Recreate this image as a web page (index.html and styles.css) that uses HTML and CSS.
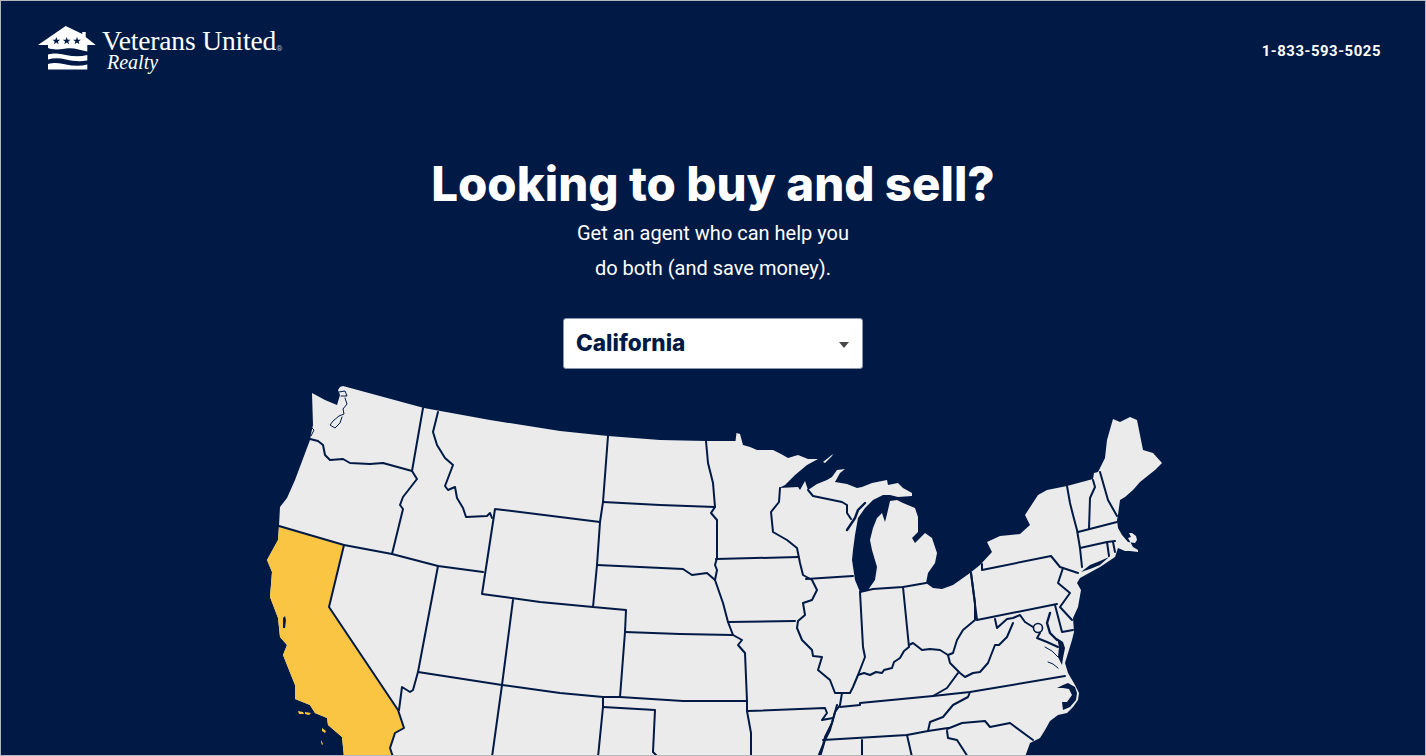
FILE: index.html
```html
<!DOCTYPE html>
<html lang="en">
<head>
<meta charset="utf-8">
<title>Veterans United Realty</title>
<link rel="stylesheet" href="styles.css">
</head>
<body>
<div class="page">
  <header class="header">
    <a class="logo" href="#">
      <svg class="logo-mark" viewBox="38 25 58 46" aria-hidden="true">
        <path class="logo-white" d="M65.7 26 L82.3 34 V32 H85.7 V37 L95.7 45 H87.3 V51.5 C80 50 74 47.5 66 48.5 C59 49.5 53 50 48 48 V45 H38 Z"/>
        <polygon class="logo-star" points="56.3,37 57.3,39.7 60.2,39.7 57.9,41.5 58.7,44.3 56.3,42.6 53.9,44.3 54.7,41.5 52.4,39.7 55.3,39.7"/>
        <polygon class="logo-star" points="66.7,37 67.7,39.7 70.6,39.7 68.3,41.5 69.1,44.3 66.7,42.6 64.3,44.3 65.1,41.5 62.8,39.7 65.7,39.7"/>
        <polygon class="logo-star" points="77,37 78,39.7 80.9,39.7 78.6,41.5 79.4,44.3 77,42.6 74.6,44.3 75.4,41.5 73.1,39.7 76,39.7"/>
        <path class="logo-white" d="M48 54.5 C55 52.5 60 53.5 66 55 C73 56.5 80 57 87.3 55 V60.5 C79 62 73 61 66 59.5 C60 58 54 57.5 48 59.5 Z"/>
        <path class="logo-white" d="M48 64 C55 62 60 63 66 64.5 C73 66 80 66.5 87.3 64.5 V69.5 H48 Z"/>
      </svg>
      <span class="logo-text">
        <span class="logo-name">Veterans United<sup class="logo-reg">®</sup></span>
        <span class="logo-sub">Realty</span>
      </span>
    </a>
    <a class="phone" href="#">1-833-593-5025</a>
  </header>
  <main class="hero">
    <h1 class="title">Looking to buy and sell?</h1>
    <p class="lead">Get an agent who can help you<br>do both (and save money).</p>
    <div class="select">
      <span class="select-value">California</span>
      <span class="select-caret"></span>
    </div>
    <svg class="map" viewBox="233 380 960 376" aria-label="Map of the United States">
      <path class="land" d="M343 386 L424 408 L490 420 L560 431 L608 436 L660 440 L706 441 L735.5 441 L736.5 433 L740 434 L743 445 L750 447 L757 450 L773 450 L781 454 L788 458 L798 455 L808 459 L818 459 L807 465 L795 475 L785 485 L779 488 L798 487 L800 490 L805 481 L808 490 L817 484 L827 480 L832 477 L837 470 L845 469 L840 473 L835 482 L847 484 L857 488 L862 487 L872 483 L887 480 L888 485 L898 483 L903 488 L912 493 L912 496 L898 497 L890 495 L883 495 L873 500 L865 508 L858 518 L855 535 L853 550 L852 560 L855 580 L860 592 L868 590 L875 580 L877 567 L872 550 L870 540 L873 528 L877 518 L882 513 L885 522 L888 510 L890 501 L897 500 L903 503 L915 508 L918 517 L918 532 L912 538 L915 543 L925 533 L932 538 L937 553 L935 563 L928 573 L926 583 L933 588 L942 589 L953 585 L970 573 L980 565 L992 552 L987 542 L1000 536 L1020 534 L1030 525 L1025 515 L1038 495 L1047 490 L1067 486 L1093 479 L1094 473 L1098 472 L1105 458 L1107 440 L1113 419 L1120 422 L1130 417 L1137 420 L1143 450 L1153 453 L1162 463 L1155 470 L1145 478 L1140 482 L1133 490 L1125 497 L1120 500 L1118 515 L1117 520 L1118 528 L1122 535 L1128 542 L1135 543 L1137 540 L1136 536 L1132 533 L1129 533 L1131 537 L1128 538 L1133 547 L1138 550 L1138 552 L1130 551 L1125 551 L1118 548 L1115 557 L1100 567 L1080 578 L1077 583 L1081 590 L1078 607 L1073 618 L1074 632 L1072 640 L1065 663 L1068 673 L1075 685 L1079 693 L1078 700 L1073 707 L1067 713 L1058 715 L1050 721 L1045 730 L1040 738 L1030 743 L1025 757 L344 757 L342 737 L328 725 L327 718 L315 713 L310 705 L295 699 L295 685 L283 655 L287 645 L280 637 L278 618 L270 597 L272 572 L267 560 L278 540 L279 526 L280 507 L287 498 L295 480 L310 440 L311 434 L313 425 L312 393 L325 400 L337 405 L340 395 L338 390 L340 387 Z"/>
      <path class="ca" d="M279 526 L344 545 L329 607 L398 710 L404 728 L395 733 L390 748 L393 757 L344 757 L342 737 L328 725 L327 718 L315 713 L310 705 L295 699 L295 685 L283 655 L287 645 L280 637 L278 618 L270 597 L272 572 L267 560 L278 540 Z"/>
      <path class="ca" d="M298 711 L303 712 L304 714 L299 714 Z M305 712 L311 713 L309 715 L305 714 Z M322 728 L326 731 L325 733 L322 731 Z M321 740 L323 744 L322 745 L321 742 Z"/>
      <path class="water" d="M283 618 L285 616 L286 620 L285 628 L283 628 Z"/>
      <path class="water" d="M1057 638 L1063 642 L1065 648 L1063 658 L1062 665 L1058 657 L1059 647 Z"/>
      <path class="water" d="M1057 688 L1063 685 L1068 683 L1075 687 L1077 693 L1076 700 L1070 707 L1063 710 L1062 702 L1067 702 L1072 695 L1069 689 L1063 688 Z"/>
      <path class="water" d="M1081 572 L1090 565 L1100 561 L1109 557 L1100 565 L1090 569 Z"/>
      <path class="land" d="M823 462 L833 454 L832 456 L825 463 Z"/>
      <g class="lines">
        <path d="M310 439 L318 441 L323 445 L325 455 L330 460 L343 459 L350 463 L370 464 L383 463 L412 471"/>
        <path d="M423 408 L412 471 L417 479 L403 497 L400 505 L403 509 L392 554"/>
        <path d="M438 412 L433 432 L437 445 L445 458 L453 465 L445 486 L448 490 L455 487 L457 498 L463 508 L466 517 L487 516 L490 513 L492 518"/>
        <path d="M279 526 L344 545 L392 554 L438 566 L483 572"/>
        <path d="M344 545 L329 607 L398 710 L404 728 L395 733 L390 748 L393 757"/>
        <path d="M438 566 L418 672 L413 690 L410 692 L402 687 L399 710"/>
        <path d="M495 509 L560 517 L600 522 M495 509 L482 594 L540 602 L593 607"/>
        <path d="M513 600 L502 685 L492 757"/>
        <path d="M418 672 L502 685 L560 693 L603 697 L620 697 L683 701 L747 701"/>
        <path d="M608 436 L603 502 L600 522 L597 565 L593 607 L626 610 L625 632 L620 697"/>
        <path d="M603 502 L660 505 L715 507"/>
        <path d="M597 565 L683 569 L692 575 L707 573 L715 580"/>
        <path d="M625 632 L680 634 L733 635"/>
        <path d="M706 441 L708 463 L713 483 L715 507 L711 513 L717 520 L717 558 L715 565 L717 570 L715 580 L723 603 L728 622 L733 635 L742 640 L738 645 L745 653 L747 701 L747 711 L751 733 L751 757"/>
        <path d="M716 559 L798 557"/>
        <path d="M728 622 L795 621"/>
        <path d="M780 488 L779 502 L771 512 L773 532 L787 540 L797 548 L800 563 L803 575 L812 580 L817 590 L812 600 L803 603 L805 615 L798 621 L797 628 L802 640 L812 650 L813 656 L822 657 L818 670 L830 680 L835 693 L842 693 L840 705 L835 712 L830 730 L825 740 L820 757"/>
        <path d="M806 579 L853 576"/>
        <path d="M808 490 L813 496 L842 502 L847 505 L847 513 L851 519"/>
        <path class="bay" d="M865 503 L858 510 L855 518 L847 530"/>
        <path d="M860 592 L863 647 L865 657 L858 675 L853 687 L850 693 L842 693"/>
        <path d="M860 592 L873 589 L903 587 L926 583"/>
        <path d="M903 587 L909 647 L904 651 L900 658 L894 662 L892 668 L884 670 L882 673 L876 672 L870 675 L864 673 L858 675"/>
        <path d="M971 573 L975 603 L975 620 L963 630 L957 640 L953 653 L948 655 L950 663 L960 673 L965 677 L973 673 L980 672 L988 663 L995 645 L999 645 L1007 637 L1013 623"/>
        <path d="M909 645 L913 643 L922 650 L930 649 L940 650 L948 655"/>
        <path d="M971 573 L977 620 L1057 604"/>
        <path d="M982 564 L982 570 L1051 556 L1060 567 L1078 573"/>
        <path d="M1063 568 L1058 583 L1070 593 L1060 607 L1072 620"/>
        <path d="M995 619 L997 628 L1007 619 L1013 618 L1020 615 L1025 622 L1033 627"/>
        <path d="M1040 633 L1037 638 L1047 642 L1058 647"/>
        <path d="M1055 605 L1062 632 L1073 630"/>
        <path class="bay" d="M1050 613 L1047 623 L1050 633 L1057 640"/>
        <path class="fine" d="M1045 647 L1052 651 L1058 657 M1048 662 L1053 664 L1058 668"/>
        <path d="M840 707 L860 705 L860 703 L933 696 L970 692 L1065 676"/>
        <path d="M933 696 L947 688 L958 673"/>
        <path d="M970 692 L968 697 L953 705 L943 717 L930 722 L928 731"/>
        <path d="M823 740 L907 735 L928 731 L948 728"/>
        <path d="M947 729 L962 723 L985 721 L990 727 L1010 723 L1033 740"/>
        <path d="M947 731 L948 738 L957 740 L968 757"/>
        <path d="M862 740 L862 757 M907 735 L912 757"/>
        <path d="M603 697 L603 707 L598 757"/>
        <path d="M603 707 L655 710 L653 752 L658 757"/>
        <path d="M748 711 L825 708 L827 713 L822 720 L833 718"/>
        <path d="M837 705 L832 723 L825 737 L823 745 L818 757"/>
        <path d="M1067 486 L1070 503 L1073 515 L1077 530 L1080 548 L1082 567"/>
        <path d="M1078 532 L1117 522"/>
        <path d="M1080 548 L1107 542 L1115 541"/>
        <path d="M1093 480 L1095 487 L1090 498 L1089 529"/>
        <path d="M1100 472 L1108 500 L1117 516"/>
        <path d="M1107 542 L1109 556 M1113 542 L1115 552"/>
        <path class="fine" d="M345 398 L347 404 L343 409 L344 414 L339 416 L333 421 L330 425 L335 428 L340 423 L342 417 M339 392 L345 391 L347 396 L341 396 M312 428 L314 430 L311 436"/>
        <path class="fine" d="M1139 484 L1141 482 M1143 482 L1145 479 M1147 479 L1148 477"/>
        <circle class="dc" cx="1038" cy="628" r="4.5"/>
      </g>
    </svg>
  </main>
</div>
</body>
</html>
```
FILE: styles.css
```css
* { box-sizing: border-box; }
html, body { margin: 0; height: 100%; }
body { overflow: hidden; background: #001a45; }
.page {
  height: 756px;
  background: #001a45;
  color: #fff;
  border: 1px solid #b4b6ba;
  overflow: hidden;
  font-family: Roboto, sans-serif;
}
.header {
  display: flex;
  justify-content: space-between;
  align-items: flex-start;
  padding: 24px 44px 0 37px;
  height: 154px;
}
.logo { display: flex; color: #fff; text-decoration: none; gap: 6px; }
.logo-mark { width: 58px; height: 46px; display: block; }
.logo-white { fill: #fff; }
.logo-star { fill: #001a45; }
.logo-text { display: flex; flex-direction: column; font-family: "Liberation Serif", serif; padding-top: 2px; }
.logo-name { font-size: 27.5px; line-height: 28px; letter-spacing: -0.15px; white-space: nowrap; }
.logo-reg { font-size: 8px; line-height: 0; color: #aab3c2; vertical-align: -1px; font-family: Roboto, sans-serif; }
.logo-sub { font-size: 20px; line-height: 15px; font-style: italic; padding-left: 5px; }
.phone {
  color: #fff;
  text-decoration: none;
  font-weight: 700;
  font-size: 14.9px;
  letter-spacing: 0.55px;
  line-height: 52px;
}
.hero { display: flex; flex-direction: column; align-items: center; }
.title {
  margin: 0;
  font-family: Inter, sans-serif;
  font-weight: 800;
  font-size: 47.4px;
  line-height: 58px;
  white-space: nowrap;
}
.lead {
  margin: 3px 0 0;
  font-size: 20px;
  line-height: 35px;
  text-align: center;
}
.select {
  margin-top: 32px;
  width: 300px;
  height: 51px;
  background: #fff;
  border: 1px solid #8a96ab;
  border-radius: 3px;
  display: flex;
  align-items: center;
  justify-content: space-between;
  padding: 0 13px 2px 12px;
  color: #001a45;
}
.select-value { font-family: Inter, sans-serif; font-weight: 800; font-size: 22.6px; }
.select-caret {
  width: 0;
  height: 0;
  margin-top: 4px;
  border-left: 5px solid transparent;
  border-right: 5px solid transparent;
  border-top: 6px solid #4a4a4a;
}
.map { display: block; width: 960px; height: 376px; margin-top: 11px; flex: none; }
.land { fill: #ebebeb; }
.ca { fill: #f9c542; }
.water { fill: #001a45; }
.lines { fill: none; stroke: #001a45; stroke-width: 2; stroke-linejoin: round; stroke-linecap: round; }
.bay { stroke-width: 2.4; }
.fine { stroke-width: 1; }
.dc { stroke-width: 1.6; fill: #ebebeb; }
```
